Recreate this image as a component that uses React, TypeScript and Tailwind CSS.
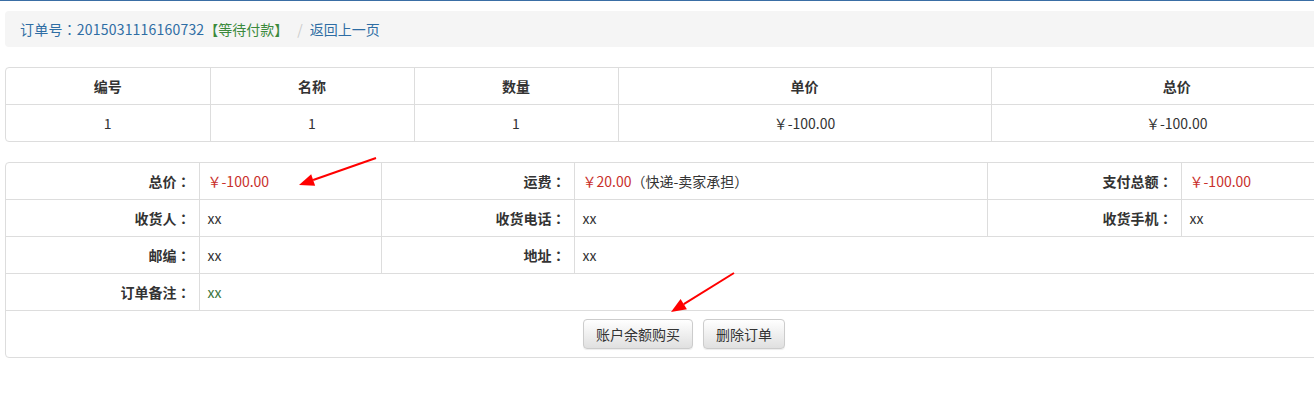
import React from "react";

const font = { fontFamily: '"Noto Sans CJK SC", "Liberation Sans", sans-serif' };
const tc = { fontFamily: '"Noto Sans CJK TC", sans-serif' };

// centred full-width colon, as in the reference
function Colon() {
  return <span style={tc}>：</span>;
}

function Arrow({ x1, y1, x2, y2 }: { x1: number; y1: number; x2: number; y2: number }) {
  const a = Math.atan2(y2 - y1, x2 - x1);
  const len = 15;
  const w = 6;
  const bx = x2 - len * Math.cos(a);
  const by = y2 - len * Math.sin(a);
  const p1 = `${bx + w * Math.sin(a)},${by - w * Math.cos(a)}`;
  const p2 = `${bx - w * Math.sin(a)},${by + w * Math.cos(a)}`;
  return (
    <g>
      <line x1={x1} y1={y1} x2={bx} y2={by} stroke="#f00" strokeWidth="2" />
      <polygon points={`${x2},${y2} ${p1} ${p2}`} fill="#f00" />
    </g>
  );
}

const th = "border-l border-[#ddd] first:border-l-0 px-2 py-2 text-center font-bold leading-5";
const td = "border-l border-t border-[#ddd] first:border-l-0 px-2 py-2 text-center leading-5";
const lbl = "border-l border-t border-[#ddd] first:border-l-0 px-2 py-2 text-right font-bold leading-5";
const val = "border-l border-t border-[#ddd] px-2 py-2 text-left leading-5";
const btn =
  "h-[30px] px-3 rounded border border-[#ccc] bg-gradient-to-b from-white to-[#e0e0e0] text-sm text-[#333] shadow-[inset_0_1px_0_rgba(255,255,255,0.15),0_1px_1px_rgba(0,0,0,0.075)]";

export default function App() {
  return (
    <div
      className="relative w-full h-[402px] overflow-hidden bg-white text-sm text-[#333] [text-spacing-trim:space-all]"
      style={font}
    >
      <div className="h-px bg-[#3a6ea5]" />
      <div className="ml-[5px] w-[1358px] pt-[10px]">
        <div className="rounded bg-[#f5f5f5] px-[15px] py-2 leading-5 mb-5">
          <span className="text-[#2e6da4] tracking-[0.2px]">
            订单号<Colon />2015031116160732
          </span>
          <span className="text-[#3c8a3c]">【等待付款】</span>
          <span className="pl-[9px] pr-[7px] text-[#ccc]">/</span>
          <span className="text-[#2e6da4]">返回上一页</span>
        </div>

        <div className="rounded border border-[#ddd] overflow-hidden mb-5">
          <table className="w-full table-fixed">
            <colgroup>
              <col className="w-[204px]" />
              <col className="w-[204px]" />
              <col className="w-[204px]" />
              <col className="w-[373px]" />
              <col />
            </colgroup>
            <thead>
              <tr>
                <th className={th}>编号</th>
                <th className={th}>名称</th>
                <th className={th}>数量</th>
                <th className={th}>单价</th>
                <th className={th}>总价</th>
              </tr>
            </thead>
            <tbody>
              <tr>
                <td className={td}>1</td>
                <td className={td}>1</td>
                <td className={td}>1</td>
                <td className={td}>￥-100.00</td>
                <td className={td}>￥-100.00</td>
              </tr>
            </tbody>
          </table>
        </div>

        <div className="rounded border border-[#ddd] overflow-hidden">
          <table className="w-full table-fixed">
            <colgroup>
              <col className="w-[193px]" />
              <col className="w-[182px]" />
              <col className="w-[193px]" />
              <col className="w-[413px]" />
              <col className="w-[194px]" />
              <col />
            </colgroup>
            <tbody className="[&>tr:first-child>td]:border-t-0">
              <tr>
                <td className={lbl}>总价<Colon /></td>
                <td className={val}>
                  <span className="text-[#c9302c]">￥-100.00</span>
                </td>
                <td className={lbl}>运费<Colon /></td>
                <td className={val}>
                  <span className="text-[#c9302c]">￥20.00</span>
                  <span style={tc}>（</span>快递-卖家承担<span style={tc}>）</span>
                </td>
                <td className={lbl}>支付总额<Colon /></td>
                <td className={val}>
                  <span className="text-[#c9302c]">￥-100.00</span>
                </td>
              </tr>
              <tr>
                <td className={lbl}>收货人<Colon /></td>
                <td className={val}>xx</td>
                <td className={lbl}>收货电话<Colon /></td>
                <td className={val}>xx</td>
                <td className={lbl}>收货手机<Colon /></td>
                <td className={val}>xx</td>
              </tr>
              <tr>
                <td className={lbl}>邮编<Colon /></td>
                <td className={val}>xx</td>
                <td className={lbl}>地址<Colon /></td>
                <td className={val} colSpan={3}>xx</td>
              </tr>
              <tr>
                <td className={lbl}>订单备注<Colon /></td>
                <td className={val + " text-[#3c763d]"} colSpan={5}>xx</td>
              </tr>
              <tr>
                <td className="border-t border-[#ddd] px-2 py-2" colSpan={6}>
                  <div className="flex justify-center gap-[10px]">
                    <button className={btn}>账户余额购买</button>
                    <button className={btn}>删除订单</button>
                  </div>
                </td>
              </tr>
            </tbody>
          </table>
        </div>
      </div>

      <svg className="absolute inset-0 pointer-events-none" width="1314" height="402">
        <Arrow x1={376} y1={158} x2={299} y2={185} />
        <Arrow x1={734} y1={273} x2={671} y2={312} />
      </svg>
    </div>
  );
}
